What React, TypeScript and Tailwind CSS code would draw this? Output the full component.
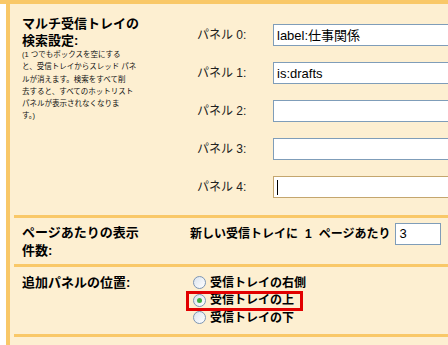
const panels = ["label:仕事関係", "is:drafts", "", "", ""];

const note = [
  "(1 つでもボックスを空にする",
  "と、受信トレイからスレッド パネ",
  "ルが消えます。検索をすべて削",
  "去すると、すべてのホットリスト",
  "パネルが表示されなくなりま",
  "す。)",
];

const positions = ["受信トレイの右側", "受信トレイの上", "受信トレイの下"];

function Radio({ checked }: { checked?: boolean }) {
  return (
    <span className="flex h-[13px] w-[13px] shrink-0 items-center justify-center rounded-full border border-[#7c95b4] bg-gradient-to-br from-[#dce4ee] to-white">
      {checked && <span className="h-[5px] w-[5px] rounded-full bg-[#3fae3f]" />}
    </span>
  );
}

function TextBox({ value, focused }: { value: string; focused?: boolean }) {
  return (
    <div
      className={
        focused
          ? "flex h-[22px] w-[200px] items-center border border-[#c4a66e] bg-white pl-[3px]"
          : "flex h-[22px] w-[200px] items-center border border-[#7f9db9] bg-white pl-[3px]"
      }
    >
      {focused ? (
        <span className="h-[15px] w-px bg-black" />
      ) : (
        <span className="text-[13px] leading-none text-black">{value}</span>
      )}
    </div>
  );
}

export default function App() {
  return (
    <div className="h-[345px] w-[448px] overflow-hidden bg-white font-['Liberation_Sans','Noto_Sans_CJK_JP',sans-serif] text-black">
      <div className="h-[4px] bg-[#f9c868]" />
      <div className="ml-[6px] h-[341px] border-l-4 border-[#f9c868] bg-[#fdefd1]">
        {/* multiple inbox search settings */}
        <div className="ml-[4px] grid grid-cols-[176px_1fr] border-b-[3px] border-[#f9c868]">
          <div className="pl-2 pt-[11px]">
            <div className="text-[13px] font-bold leading-[17px]">
              マルチ受信トレイの
              <br />
              検索設定:
            </div>
            <div className="text-[7.5px] leading-[12.3px] text-[#111]">
              {note.map((line) => (
                <div key={line} className="whitespace-nowrap">
                  {line}
                </div>
              ))}
            </div>
          </div>
          <div className="flex flex-col gap-4 pb-[17px] pt-[20px]">
            {panels.map((value, i) => (
              <div key={i} className="flex items-center">
                <span className="w-[83px] shrink-0 pl-[7px] text-[12px] text-[#222]">パネル {i}:</span>
                <TextBox value={value} focused={i === 4} />
              </div>
            ))}
          </div>
        </div>

        {/* threads per page */}
        <div className="ml-[4px] grid h-[49px] grid-cols-[176px_1fr] border-b-[3px] border-[#f9c868]">
          <div className="pl-2 pt-[6px] text-[13px] font-bold leading-[18px]">
            ページあたりの表示
            <br />
            件数:
          </div>
          <div className="pt-[5px]">
            <div className="flex h-[22px] items-center">
              <span className="whitespace-nowrap text-[12px] font-bold">
                新しい受信トレイに<span className="mx-[7px]">1</span>ページあたり
              </span>
              <div className="ml-[5px] flex h-[22px] w-[46px] items-center border border-[#7f9db9] bg-white pl-[3px] text-[13px]">
                3
              </div>
            </div>
          </div>
        </div>

        {/* extra panel position */}
        <div className="ml-[4px] grid h-[70px] grid-cols-[176px_1fr] border-b-[3px] border-[#f9c868]">
          <div className="pl-2 pt-[7px] text-[13px] font-bold leading-[18px]">追加パネルの位置:</div>
          <div className="pl-[3px] pt-[7px]">
            {positions.map((label, i) => (
              <div key={label} className="relative flex h-[17.5px] items-center gap-[4px]">
                <Radio checked={i === 1} />
                <span className="whitespace-nowrap text-[12px] font-bold">{label}</span>
                {i === 1 && (
                  <span className="absolute left-[-7px] top-[-1px] h-[20px] w-[117px] border-[3px] border-[#e20000]" />
                )}
              </div>
            ))}
          </div>
        </div>
      </div>
    </div>
  );
}
